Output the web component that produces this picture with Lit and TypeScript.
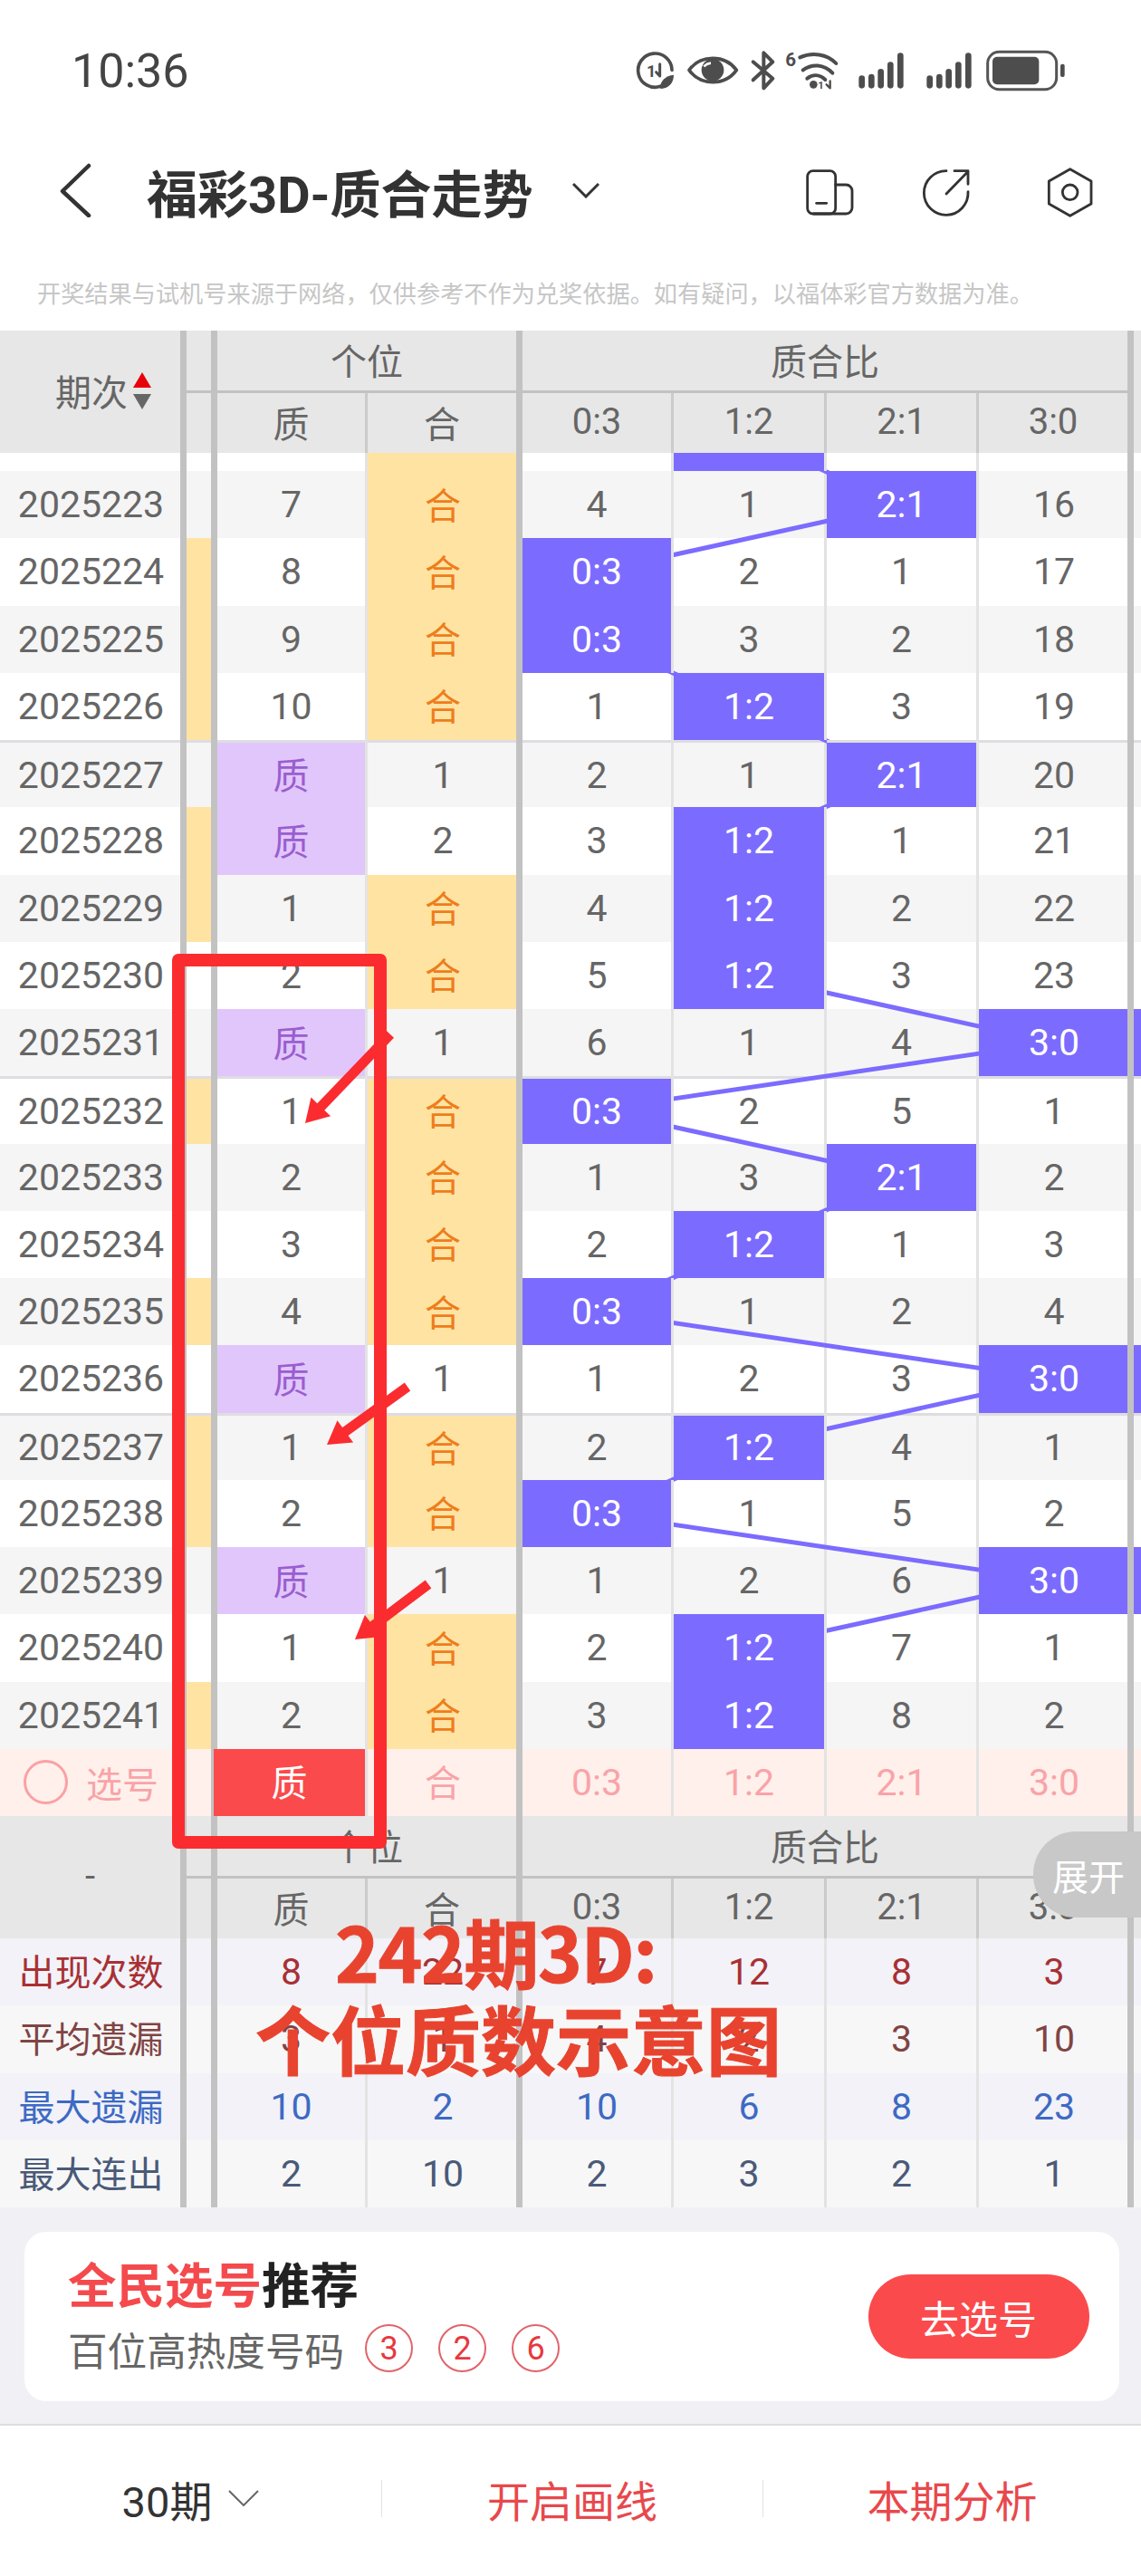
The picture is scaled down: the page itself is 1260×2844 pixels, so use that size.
import { LitElement, html, css, svg } from 'lit';
import { customElement } from 'lit/decorators.js';

// issue suffix, ge value (0 = 质, else number), he value (0 = 合), ratio misses, hit column, side marker
type Row = { id: number; zhi: number; he: number; miss: number[]; hit: number; side: boolean };

const r = (id: number, zhi: number, he: number, miss: number[], hit: number, side = false): Row => ({
  id, zhi, he, miss, hit, side,
});

const ROWS: Row[] = [
  r(2025223, 7, 0, [4, 1, 0, 16], 2),
  r(2025224, 8, 0, [0, 2, 1, 17], 0, true),
  r(2025225, 9, 0, [0, 3, 2, 18], 0, true),
  r(2025226, 10, 0, [1, 0, 3, 19], 1, true),
  r(2025227, 0, 1, [2, 1, 0, 20], 2),
  r(2025228, 0, 2, [3, 0, 1, 21], 1, true),
  r(2025229, 1, 0, [4, 0, 2, 22], 1, true),
  r(2025230, 2, 0, [5, 0, 3, 23], 1),
  r(2025231, 0, 1, [6, 1, 4, 0], 3),
  r(2025232, 1, 0, [0, 2, 5, 1], 0, true),
  r(2025233, 2, 0, [1, 3, 0, 2], 2),
  r(2025234, 3, 0, [2, 0, 1, 3], 1),
  r(2025235, 4, 0, [0, 1, 2, 4], 0, true),
  r(2025236, 0, 1, [1, 2, 3, 0], 3),
  r(2025237, 1, 0, [2, 0, 4, 1], 1, true),
  r(2025238, 2, 0, [0, 1, 5, 2], 0, true),
  r(2025239, 0, 1, [1, 2, 6, 0], 3),
  r(2025240, 1, 0, [2, 0, 7, 1], 1),
  r(2025241, 2, 0, [3, 0, 8, 2], 1, true),
];

const RATIOS = ['0:3', '1:2', '2:1', '3:0'];
const RATIO_X = [659, 826.5, 995, 1163];
const ROW_H = 74.25;
const STUB_H = 20;

const STATS = [
  { name: '出现次数', cls: 's1', vals: [8, 22, 7, 12, 8, 3] },
  { name: '平均遗漏', cls: 's2', vals: [3, 1, 4, 2, 3, 10] },
  { name: '最大遗漏', cls: 's3', vals: [10, 2, 10, 6, 8, 23] },
  { name: '最大连出', cls: 's4', vals: [2, 10, 2, 3, 2, 1] },
];

// annotation arrows: tail, tip
const ARROWS = [
  [431, 1142, 337, 1240],
  [450, 1531, 361, 1595],
  [473, 1749, 392, 1810],
];

function arrowPoints([x1, y1, x2, y2]: number[]) {
  const len = Math.hypot(x2 - x1, y2 - y1);
  const ux = (x2 - x1) / len;
  const uy = (y2 - y1) / len;
  const nx = -uy;
  const ny = ux;
  const bx = x2 - ux * 25;
  const by = y2 - uy * 25;
  const p = (x: number, y: number) => `${x.toFixed(1)},${y.toFixed(1)}`;
  return [
    p(x1 + nx * 5.5, y1 + ny * 5.5),
    p(bx + nx * 5.5, by + ny * 5.5),
    p(bx + nx * 15, by + ny * 15),
    p(x2, y2),
    p(bx - nx * 15, by - ny * 15),
    p(bx - nx * 5.5, by - ny * 5.5),
    p(x1 - nx * 5.5, y1 - ny * 5.5),
  ].join(' ');
}

@customElement('app-root')
export class AppRoot extends LitElement {
  static override styles = css`
    :host {
      display: block;
      position: relative;
      width: 1260px;
      height: 2844px;
      overflow: hidden;
      background: #fff;
      color: #666;
      font-family: Roboto, 'Noto Sans CJK SC', sans-serif;
    }
    svg {
      display: block;
    }
    .status {
      height: 158px;
      display: flex;
      padding-left: 79px;
    }
    .clock {
      font-size: 52px;
      line-height: 158px;
      color: #444;
    }
    .status-icons {
      margin: 40px 70px 0 auto;
    }
    .nav {
      height: 104px;
      display: flex;
      align-items: center;
      padding-left: 60px;
    }
    .back {
      margin-right: 57px;
    }
    .title {
      font-size: 56px;
      font-weight: 700;
      color: #333;
      white-space: nowrap;
      width: 424px;
    }
    .caret {
      margin-left: 46px;
    }
    .nav-icons {
      margin: 0 40px 0 auto;
    }
    .notice {
      height: 103px;
      box-sizing: border-box;
      padding: 45px 0 0 41px;
      font-size: 26.2px;
      line-height: 36px;
      color: #c6c6c6;
      white-space: nowrap;
    }

    .grid {
      display: grid;
      grid-template-columns: 206px 34px 166px 171px 167px 169px 168px 171px 8px;
    }
    .head {
      grid-template-rows: 69px 66px;
      background: #e7e7e7;
      font-size: 40px;
      color: #666;
    }
    .head > div {
      display: flex;
      align-items: center;
      justify-content: center;
      box-sizing: border-box;
      padding-bottom: 3px;
    }
    .head .thick {
      border-right: 7px solid #c2c2c2;
    }
    .head .thin {
      border-right: 3px solid #cbcbcb;
    }
    .head .under {
      border-bottom: 3px solid #c2c2c2;
    }
    .corner {
      grid-row: span 2;
    }
    .corner.sorted {
      justify-content: flex-start !important;
      padding-left: 61px;
      gap: 6px;
    }
    .span2 {
      grid-column: span 2;
    }
    .span4 {
      grid-column: span 4;
    }
    .sort {
      display: flex;
      flex-direction: column;
      gap: 7px;
    }
    .tri {
      width: 0;
      height: 0;
      border-left: 10px solid transparent;
      border-right: 10px solid transparent;
    }
    .tri.up {
      border-bottom: 17px solid #e8000b;
    }
    .tri.down {
      border-top: 17px solid #666;
    }

    .body {
      position: relative;
    }
    .trend {
      position: absolute;
      left: 0;
      top: 0;
      z-index: 1;
      pointer-events: none;
    }
    .row {
      height: 74.25px;
      font-size: 41px;
      background: #fff;
    }
    .row.alt {
      background: #f5f5f5;
    }
    .row.stub {
      height: 20px;
    }
    .cell {
      display: flex;
      align-items: center;
      justify-content: center;
      box-sizing: border-box;
      border-right: 3px solid #e3e3e3;
    }
    .cell.thick {
      border-right: 7px solid #c2c2c2;
      padding-left: 2px;
    }
    .cell.none {
      border-right: none;
    }
    .sep .cell {
      box-shadow: inset 0 3px 0 #dddde2;
      padding-top: 3px;
    }
    .cjk {
      font-size: 40px;
      padding-bottom: 3px;
    }
    .yellow {
      background: #ffe3a3;
      color: #ee7d1a;
    }
    .purple {
      background: #e1c6fc;
      color: #9a5ecf;
    }
    .hit {
      position: relative;
      z-index: 2;
      background: #7c6bff;
      color: #fff;
    }

    .pick {
      background: #fff0eb;
      color: #f9a3a8;
    }
    .cell.pick-name {
      justify-content: flex-start;
      padding-left: 26px;
      gap: 20px;
      font-size: 40px;
    }
    .ring {
      width: 49px;
      height: 49px;
      box-sizing: border-box;
      border: 3px solid #fba0a5;
      border-radius: 50%;
    }
    .pick-cell {
      position: relative;
      z-index: 2;
      margin-left: -4px;
      background: #fb4a4c;
      color: #fff;
    }
    .stat-name {
      font-size: 40px;
      padding-bottom: 4px;
    }
    .s1 {
      background: #f2f2f8;
      color: #a83034;
    }
    .s2 {
      background: #f7f7f7;
      color: #804444;
    }
    .s3 {
      background: #f2f2f8;
      color: #3d6ac4;
    }
    .s4 {
      background: #f7f7f7;
      color: #4a5a78;
    }

    .panel {
      height: 241px;
      box-sizing: border-box;
      padding: 27px 24.5px 0 27px;
      background: #f1f1f5;
      border-bottom: 2px solid #ddd;
    }
    .card {
      height: 187px;
      box-sizing: border-box;
      display: flex;
      align-items: center;
      justify-content: space-between;
      padding: 0 33px 0 48px;
      background: #fff;
      border-radius: 24px;
    }
    .card-text {
      display: flex;
      flex-direction: column;
      gap: 10px;
    }
    .card-title {
      font-size: 53.5px;
      line-height: 60px;
      font-weight: 700;
      color: #222;
    }
    .card-title span {
      color: #f44a4d;
    }
    .card-sub {
      display: flex;
      align-items: center;
      height: 56px;
      font-size: 43.6px;
      color: #666;
    }
    .balls {
      display: flex;
      gap: 28px;
      margin-left: 23px;
    }
    .ball {
      width: 53px;
      height: 53px;
      box-sizing: border-box;
      display: flex;
      align-items: center;
      justify-content: center;
      border: 2px solid #e0646a;
      border-radius: 50%;
      font-size: 36px;
      color: #e6393f;
    }
    .go {
      width: 244px;
      height: 93px;
      display: flex;
      align-items: center;
      justify-content: center;
      border-radius: 47px;
      background: #fb4a4c;
      color: #fff;
      font-size: 43px;
    }
    .tabs {
      height: 160px;
      display: grid;
      grid-template-columns: 421px 421px 418px;
      align-items: center;
    }
    .tab {
      height: 41px;
      display: flex;
      align-items: center;
      justify-content: center;
      font-size: 47px;
      color: #e8484c;
      border-left: 1px solid #e2e2e2;
    }
    .tab.first {
      border-left: none;
      color: #333;
      gap: 18px;
    }

    .box {
      position: absolute;
      left: 190px;
      top: 1053px;
      width: 237px;
      height: 988px;
      box-sizing: border-box;
      border: 14px solid #fb2c30;
      border-radius: 7px;
      z-index: 3;
    }
    .arrows {
      position: absolute;
      left: 0;
      top: 0;
      z-index: 3;
      pointer-events: none;
    }
    .note {
      position: absolute;
      z-index: 4;
      font-family: 'Noto Sans CJK SC', sans-serif;
      font-size: 83px;
      line-height: 100px;
      font-weight: 700;
      color: #e8432f;
      white-space: nowrap;
      -webkit-text-stroke: 1px #e8432f;
    }
    .note.a {
      left: 370px;
      top: 2103px;
      letter-spacing: -1.5px;
    }
    .note.b {
      left: 282px;
      top: 2199px;
    }
    .expand {
      position: absolute;
      z-index: 4;
      left: 1141px;
      top: 2022px;
      width: 119px;
      height: 95px;
      box-sizing: border-box;
      padding-left: 21px;
      display: flex;
      align-items: center;
      background: #c8c8c8;
      border-radius: 47px 0 0 47px;
      color: #fff;
      font-size: 40px;
    }
  `;

  private statusIcons() {
    // drawn in 3x units of the 500x70 strip
    const c = '#4d4d4d';
    const bars = [[0, 130], [32, 125], [63, 108], [95, 85], [128, 55]];
    return html`<svg class="status-icons" width="500" height="70" viewBox="0 0 1500 210">
      <g fill="none" stroke=${c} stroke-width="11" stroke-linecap="round">
        <path d="M118 166A56 56 0 1 1 156 112" />
        <path stroke-width="9" d="M116 92V132M104 119L116 132" />
        <path d="M213 112C250 60 332 60 370 112C332 165 250 165 213 112Z" stroke-linejoin="round" />
        <path stroke-width="12" stroke-linejoin="round" d="M425 85L490 140L460 172V55L490 85L425 145" />
        <path stroke-width="12" d="M580 70C620 52 670 58 700 90M590 112C620 90 660 92 688 122M604 140C622 126 645 126 664 144" />
        <path stroke-width="7" d="M680 148V172M668 160L680 172" />
      </g>
      <text x="72" y="134" font-size="54" font-weight="700" fill=${c} font-family="Roboto">1</text>
      <path fill=${c} d="M116 172C116 150 135 130 162 128C162 155 145 172 120 174Z" />
      <circle cx="291" cy="112" r="37" fill=${c} />
      <path fill="none" stroke="#fff" stroke-width="8" d="M262 100C268 94 276 90 285 89" />
      <text x="532" y="100" font-size="62" font-weight="700" fill=${c} font-family="Roboto">6</text>
      <circle cx="625" cy="160" r="13" fill=${c} />
      <text x="640" y="174" font-size="34" font-weight="700" fill=${c} font-family="Roboto">1</text>
      ${[0, 225].map((off) =>
        bars.map(
          ([x, top]) =>
            svg`<rect x=${775 + off + x} y=${top} width="20" height=${173 - top} rx="10" fill=${c} />`,
        ),
      )}
      <rect x="1202" y="52" width="228" height="124" rx="38" fill="none" stroke="#555" stroke-width="9" />
      <rect x="1218" y="68" width="154" height="92" rx="15" fill=${c} />
      <rect x="1443" y="92" width="14" height="43" rx="6" fill=${c} />
    </svg>`;
  }

  private navIcons() {
    return html`<svg class="nav-icons" width="350" height="80" viewBox="0 0 1050 240">
      <g fill="none" stroke="#333" stroke-width="8.5" stroke-linecap="round" stroke-linejoin="round">
        <rect x="65" y="56" width="93" height="142" rx="18" />
        <path d="M158 102H193A20 20 0 0 1 213 122V178A20 20 0 0 1 193 198H85" />
        <path d="M95 163H128" />
        <path d="M525 56A73 73 0 1 0 597 125" />
        <path d="M525 132L595 60M552 56H597V100" />
        <path d="M935 50L1005 90V165L935 205L865 165V90Z" />
        <circle cx="935" cy="127" r="25" />
      </g>
    </svg>`;
  }

  private head(corner: unknown, sorted = false) {
    return html`<div class="grid head">
      <div class="corner thick ${sorted ? 'sorted' : ''}">${corner}</div>
      <div class="thick under"></div>
      <div class="span2 thick under">个位</div>
      <div class="span4 thick under">质合比</div>
      <div></div>
      <div class="thick"></div>
      <div class="thin">质</div>
      <div class="thick">合</div>
      ${RATIOS.map((t, i) => html`<div class=${i === 3 ? 'thick' : 'thin'}>${t}</div>`)}
      <div></div>
    </div>`;
  }

  private dataRow(row: Row, i: number) {
    const sep = i === 4 || i === 9 || i === 14;
    return html`<div class="grid row ${i % 2 === 0 ? 'alt' : ''} ${sep ? 'sep' : ''}">
      <div class="cell thick">${row.id}</div>
      <div class="cell thick ${row.side ? 'yellow' : ''}"></div>
      ${row.zhi === 0
        ? html`<div class="cell cjk purple">质</div>`
        : html`<div class="cell">${row.zhi}</div>`}
      ${row.he === 0
        ? html`<div class="cell thick cjk yellow">合</div>`
        : html`<div class="cell thick">${row.he}</div>`}
      ${row.miss.map((m, c) => {
        const thick = c === 3 ? 'thick' : '';
        return row.hit === c
          ? html`<div class="cell ${thick} hit">${RATIOS[c]}</div>`
          : html`<div class="cell ${thick}">${m}</div>`;
      })}
      <div class="cell none ${row.hit === 3 ? 'hit' : ''}"></div>
    </div>`;
  }

  private trendLines() {
    const h = STUB_H + ROWS.length * ROW_H;
    const pts = [
      [RATIO_X[1], STUB_H - ROW_H / 2],
      ...ROWS.map((row, i) => [RATIO_X[row.hit], STUB_H + i * ROW_H + ROW_H / 2]),
    ];
    return html`<svg class="trend" width="1260" height=${h} viewBox="0 0 1260 ${h}">
      <polyline
        points=${pts.map((p) => p.join(',')).join(' ')}
        fill="none"
        stroke="#7c6bff"
        stroke-width="5"
      />
    </svg>`;
  }

  override render() {
    return html`
      <div class="status">
        <div class="clock">10:36</div>
        ${this.statusIcons()}
      </div>
      <div class="nav">
        <svg class="back" width="45" height="60" viewBox="0 0 45 60">
          <path d="M38 3L9 31L38 58" fill="none" stroke="#333" stroke-width="4.5" stroke-linecap="round" stroke-linejoin="round" />
        </svg>
        <div class="title">福彩3D-质合走势</div>
        <svg class="caret" width="30" height="18" viewBox="0 0 30 18">
          <path d="M1 2L15 16L29 2" fill="none" stroke="#333" stroke-width="3" />
        </svg>
        ${this.navIcons()}
      </div>
      <div class="notice">开奖结果与试机号来源于网络，仅供参考不作为兑奖依据。如有疑问，以福体彩官方数据为准。</div>

      ${this.head(
        html`期次<span class="sort"><i class="tri up"></i><i class="tri down"></i></span>`,
        true,
      )}
      <div class="body">
        ${this.trendLines()}
        <div class="grid row stub">
          <div class="cell thick"></div>
          <div class="cell thick"></div>
          <div class="cell"></div>
          <div class="cell thick yellow"></div>
          <div class="cell"></div>
          <div class="cell hit"></div>
          <div class="cell"></div>
          <div class="cell thick"></div>
          <div class="cell none"></div>
        </div>
        ${ROWS.map((row, i) => this.dataRow(row, i))}
      </div>
      <div class="grid row pick">
        <div class="cell thick pick-name"><span class="ring"></span>选号</div>
        <div class="cell thick"></div>
        <div class="cell cjk pick-cell">质</div>
        <div class="cell thick cjk">合</div>
        ${RATIOS.map((t, i) => html`<div class="cell ${i === 3 ? 'thick' : ''}">${t}</div>`)}
        <div class="cell none"></div>
      </div>
      ${this.head('-')}
      ${STATS.map(
        (s) => html`<div class="grid row ${s.cls}">
          <div class="cell thick stat-name">${s.name}</div>
          <div class="cell thick"></div>
          ${s.vals.map(
            (v, i) => html`<div class="cell ${i === 1 || i === 5 ? 'thick' : ''}">${v}</div>`,
          )}
          <div class="cell none"></div>
        </div>`,
      )}

      <div class="panel">
        <div class="card">
          <div class="card-text">
            <div class="card-title"><span>全民选号</span>推荐</div>
            <div class="card-sub">
              百位高热度号码
              <div class="balls">
                ${[3, 2, 6].map((n) => html`<div class="ball">${n}</div>`)}
              </div>
            </div>
          </div>
          <div class="go">去选号</div>
        </div>
      </div>
      <div class="tabs">
        <div class="tab first">
          30期
          <svg width="34" height="18" viewBox="0 0 34 18">
            <path d="M1 1L17 17L33 1" fill="none" stroke="#666" stroke-width="2" />
          </svg>
        </div>
        <div class="tab">开启画线</div>
        <div class="tab">本期分析</div>
      </div>

      <div class="box"></div>
      <svg class="arrows" width="1260" height="2844" viewBox="0 0 1260 2844">
        ${ARROWS.map((a) => svg`<polygon points=${arrowPoints(a)} fill="#fb2c30" />`)}
      </svg>
      <div class="note a">242期3D:</div>
      <div class="note b">个位质数示意图</div>
      <div class="expand">展开</div>
    `;
  }
}
